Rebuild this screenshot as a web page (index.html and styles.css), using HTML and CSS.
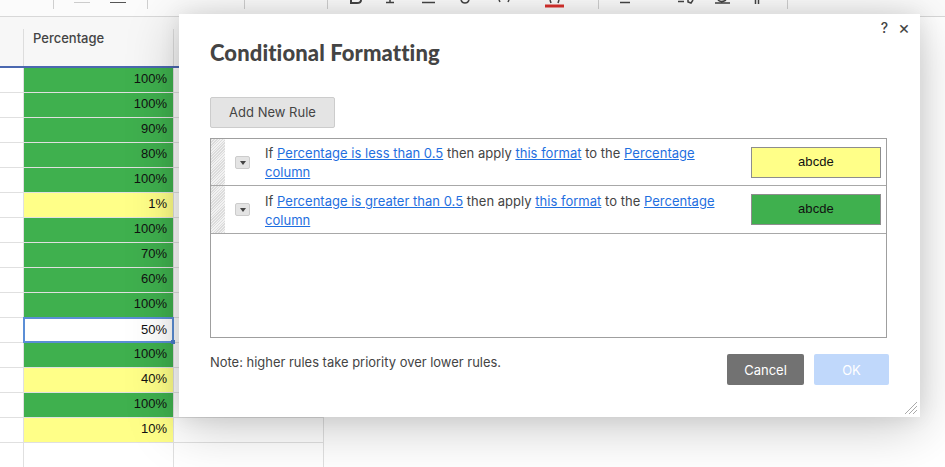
FILE: index.html
```html
<!DOCTYPE html>
<html lang="en">
<head>
<meta charset="utf-8">
<title>Conditional Formatting</title>
<link rel="stylesheet" href="styles.css">
</head>
<body>
<div class="page">
  <div class="toolbar">
    <span class="tsep s1"></span>
    <span class="tbar b1"></span><span class="tbar b2"></span>
    <span class="tsep s2"></span>
    <span class="tsep s3"></span>
    <span class="tsep s4"></span>
    <span class="tsep s5"></span>
    <span class="tsep s6"></span>
    <svg class="ticons" width="450" height="16" viewBox="0 0 450 16" fill="none" stroke="#444" stroke-width="1.500">
      <path d="M11 0v3h6q4 0 4-3" stroke-width="2"/>
      <path d="M46 2.500h8M50 0v3"/>
      <path d="M82 2.500h13"/>
      <path d="M121 0q1 3 4 3t4-3"/>
      <path d="M159 0l1 2M169 0l-1 2"/>
      <path d="M205 6h19" stroke="#d8302c" stroke-width="3"/>
      <path d="M210 0l1 3M219 0l-1 3"/>
      <path d="M280 2.500h10"/>
      <path d="M338 1.500h6M348 0v2l3 1 2-3"/>
      <path d="M378 0q3 3 8 0M375 3h15"/>
      <path d="M415.500 0v4M418.500 0v4" stroke-width="1.500"/>
    </svg>
  </div>
  <div class="sheet">
    <div class="head">
      <div class="hcell idx"></div>
      <div class="hcell pct">Percentage</div>
      <div class="hcell next"></div>
    </div>
    <div class="row"><div class="idx"></div><div class="val green">100%</div><div class="next"></div></div>
    <div class="row"><div class="idx"></div><div class="val green">100%</div><div class="next"></div></div>
    <div class="row"><div class="idx"></div><div class="val green">90%</div><div class="next"></div></div>
    <div class="row"><div class="idx"></div><div class="val green">80%</div><div class="next"></div></div>
    <div class="row"><div class="idx"></div><div class="val green">100%</div><div class="next"></div></div>
    <div class="row"><div class="idx"></div><div class="val yellow">1%</div><div class="next"></div></div>
    <div class="row"><div class="idx"></div><div class="val green">100%</div><div class="next"></div></div>
    <div class="row"><div class="idx"></div><div class="val green">70%</div><div class="next"></div></div>
    <div class="row"><div class="idx"></div><div class="val green">60%</div><div class="next"></div></div>
    <div class="row"><div class="idx"></div><div class="val green">100%</div><div class="next"></div></div>
    <div class="row"><div class="idx"></div><div class="val active">50%</div><div class="next"></div></div>
    <div class="row"><div class="idx"></div><div class="val green">100%</div><div class="next"></div></div>
    <div class="row"><div class="idx"></div><div class="val yellow">40%</div><div class="next"></div></div>
    <div class="row"><div class="idx"></div><div class="val green">100%</div><div class="next"></div></div>
    <div class="row"><div class="idx"></div><div class="val yellow">10%</div><div class="next"></div></div>
    <div class="row"><div class="idx"></div><div class="val"></div><div class="next"></div></div>
  </div>
  <div class="dialog">
    <div class="dlg-ctrl"><span class="help">?</span><span class="close">×</span></div>
    <h1>Conditional Formatting</h1>
    <button class="add">Add New Rule</button>
    <div class="rules">
      <div class="rule">
        <div class="grip"></div>
        <div class="menu"><span class="arrow"></span></div>
        <div class="desc">If <a>Percentage is less than 0.5</a> then apply <a>this format</a> to the <a>Percentage column</a></div>
        <div class="sample s-yellow">abcde</div>
      </div>
      <div class="rule">
        <div class="grip"></div>
        <div class="menu"><span class="arrow"></span></div>
        <div class="desc">If <a>Percentage is greater than 0.5</a> then apply <a>this format</a> to the <a>Percentage column</a></div>
        <div class="sample s-green">abcde</div>
      </div>
    </div>
    <div class="foot">
      <div class="note">Note: higher rules take priority over lower rules.</div>
      <div class="actions"><button class="cancel">Cancel</button><button class="ok">OK</button></div>
    </div>
    <svg class="resize" width="12" height="12" viewBox="0 0 12 12" stroke="#aaa" stroke-width="1"><path d="M0 12L12 0M4 12l8-8M8 12l4-4"/></svg>
  </div>
</div>
</body>
</html>
```

FILE: styles.css
```css
* { box-sizing: border-box; }
html, body { margin: 0; padding: 0; }
body { width: 945px; height: 467px; overflow: hidden; background: #fff; font-family: Inter, "Liberation Sans", sans-serif; }
.page { position: relative; width: 945px; height: 467px; overflow: hidden; }
.toolbar { position: relative; height: 17px; background: #fbfbfb; border-bottom: 1px solid #d8d8d8; }
.tsep { position: absolute; top: 0; width: 1px; height: 9px; background: #cfcfcf; }
.s1 { left: 53px; } .s2 { left: 147px; } .s3 { left: 244px; } .s4 { left: 327px; } .s5 { left: 598px; } .s6 { left: 787px; }
.tbar { position: absolute; top: 2px; height: 1px; }
.b1 { left: 74px; width: 16px; background: #ccc; }
.b2 { left: 110px; width: 16px; background: #555; }
.ticons { position: absolute; left: 340px; top: 0; }
.sheet { width: 324px; }
.head { display: flex; height: 51px; background: #f7f7f7; border-bottom: 2px solid #4b68b0; }
.hcell { height: 49px; }
.hcell.idx { width: 23px; }
.hcell.pct, .hcell.next { margin-top: 12px; border-left: 1px solid #ddd; height: 37px; }
.hcell.pct { width: 150px; padding: 1px 9px; font-size: 13px; font-weight: 500; color: #444; line-height: 16px; }
.hcell.next { width: 151px; border-right: 1px solid #ddd; }
.row { display: flex; height: 25px; }
.row > div { border-bottom: 1px solid #e0e0e0; }
.row .idx { width: 23px; }
.val { width: 150px; border-left: 1px solid #e0e0e0; padding-right: 6px; text-align: right; font-family: "Liberation Sans", Arial, sans-serif; font-size: 13px; line-height: 22px; color: #111; }
.next { width: 151px; border-left: 1px solid #e0e0e0; border-right: 1px solid #e0e0e0; }
.green { background: #3fb04e; }
.yellow { background: #ffff88; }
.row .active { position: relative; z-index: 1; width: 151px; margin-right: -1px; height: 26px; margin-top: -1px; background: #fff; border: 2px solid #5b8ed6; line-height: 21px; padding-right: 5px; }
.active::after { content: ""; position: absolute; right: -3px; bottom: -3px; width: 4px; height: 4px; background: #4a7fcc; }
.dialog { position: absolute; z-index: 2; left: 179px; top: 14px; width: 741px; height: 403px; background: #fff; padding: 26px 33px 0 31px; box-shadow: 0 10px 50px rgba(0,0,0,.22), 0 0 20px rgba(0,0,0,.08); }
.dlg-ctrl { position: absolute; top: 6px; right: 10px; display: flex; gap: 10px; color: #444; font-size: 14px; font-weight: 500; line-height: 16px; }
.close { font-size: 18px; font-weight: 400; }
h1 { margin: 0; height: 57px; font-family: Lato, "Noto Sans", sans-serif; font-size: 22px; font-weight: 900; letter-spacing: .1px; line-height: 26px; color: #444; }
.add { display: block; width: 125px; height: 31px; padding: 0 0 2px; background: #e4e4e4; border: 1px solid #ccc; border-radius: 2px; font: 400 13px Inter, sans-serif; color: #444; }
.rules { margin-top: 10px; width: 677px; height: 200px; border: 1px solid #9f9f9f; }
.rule { display: flex; height: 47px; border-bottom: 1px solid #a8a8a8; }
.rule + .rule { height: 48px; }
.rule + .rule .desc { padding-top: 6px; }
.grip { width: 14px; background: repeating-linear-gradient(135deg, #dcdcdc 0 1px, #f2f2f2 1px 2px); }
.menu { width: 40px; display: flex; justify-content: center; padding: 17px 5px 0 0; }
.menu .arrow { position: relative; display: block; width: 15px; height: 13px; border: 1px solid #ccc; border-radius: 2px; background: #e4e4e4; }
.arrow::after { content: ""; position: absolute; left: 3.500px; top: 4px; border: 3.500px solid transparent; border-top: 4px solid #444; border-bottom: 0; }
.desc { width: 466px; padding-top: 5px; font-size: 13px; letter-spacing: .02px; line-height: 18.500px; color: #444; }
.desc a { color: #1f6fe0; text-decoration: underline; }
.sample { margin: 8px 0 0 20px; width: 130px; height: 31px; border: 1px solid #8d8d8d; text-align: center; font-family: "Liberation Sans", Arial, sans-serif; font-size: 13px; letter-spacing: .1px; line-height: 28px; color: #111; }
.s-yellow { background: #ffff88; }
.s-green { background: #3fb04e; }
.foot { display: flex; justify-content: space-between; margin-top: 16px; width: 679px; }
.note { font-size: 12.950px; line-height: 16px; color: #444; }
.actions { display: flex; gap: 10px; }
.actions button { height: 31px; padding: 0; border: 0; border-radius: 2px; font: 400 13px Inter, sans-serif; color: #fff; }
.cancel { width: 77px; background: #727272; }
.ok { width: 75px; background: #c0d8fb; }
.resize { position: absolute; right: 3px; bottom: 3px; }
```
